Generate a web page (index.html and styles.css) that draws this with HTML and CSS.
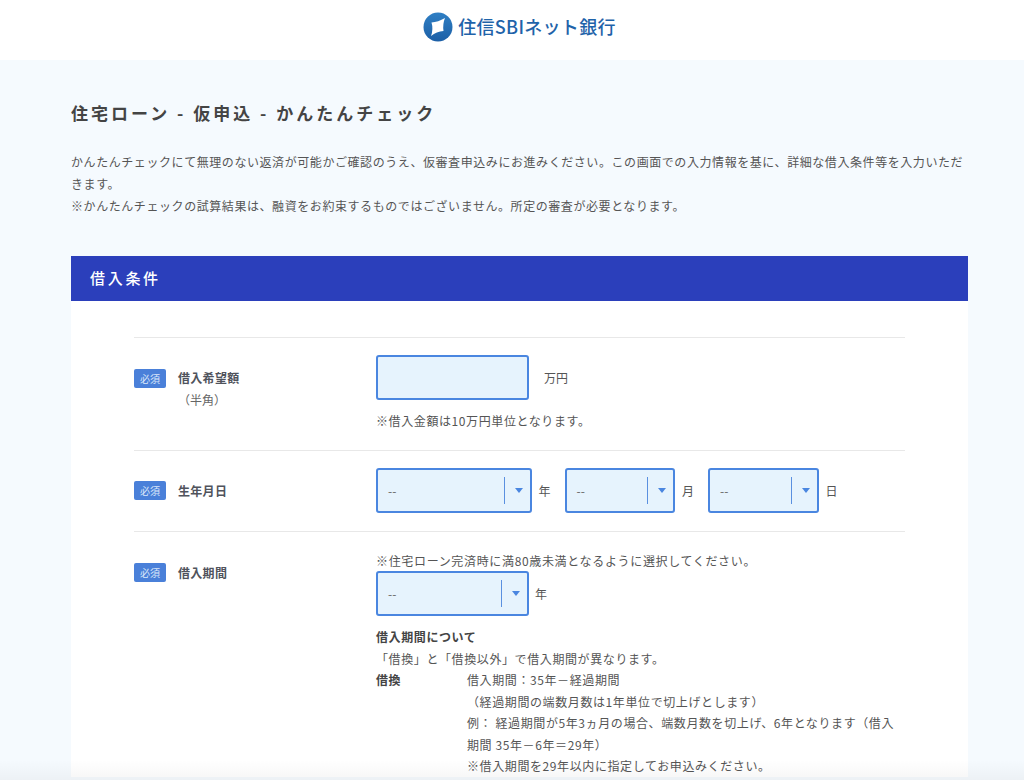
FILE: index.html
```html
<!DOCTYPE html>
<html lang="ja">
<head>
<meta charset="utf-8">
<title>住宅ローン - 仮申込 - かんたんチェック</title>
<link rel="stylesheet" href="styles.css">
</head>
<body>
<header class="site-header">
  <div class="logo">
    <svg class="logo-mark" width="30" height="30" viewBox="0 0 30 30" aria-hidden="true">
      <defs><linearGradient id="lg" x1="0" y1="0" x2="0" y2="1"><stop offset="0" stop-color="#2f7fc4"/><stop offset="1" stop-color="#1c5fa6"/></linearGradient></defs>
      <circle cx="15" cy="15" r="14.5" fill="url(#lg)"/>
      <path d="M8.5 10.5 Q15 10 22 6 Q19.5 12 20.5 19 Q13.5 19.5 8 24 Q10.5 17 8.5 10.5 Z" fill="#fff"/>
    </svg>
    <span class="logo-text">住信SBIネット銀行</span>
  </div>
</header>
<main class="page">
  <h1 class="title">住宅ローン - 仮申込 - かんたんチェック</h1>
  <p class="intro">かんたんチェックにて無理のない返済が可能かご確認のうえ、仮審査申込みにお進みください。この画面での入力情報を基に、詳細な借入条件等を入力いただきます。<br>※かんたんチェックの試算結果は、融資をお約束するものではございません。所定の審査が必要となります。</p>
  <section class="card">
    <h2 class="card-head">借入条件</h2>
    <div class="card-body">
      <div class="row row-amount">
        <div class="label"><span class="badge">必須</span><div class="label-text"><strong>借入希望額</strong><span class="sub">（半角）</span></div></div>
        <div class="control">
          <div class="inline"><input class="input" type="text" aria-label="借入希望額"><span class="unit unit-wide">万円</span></div>
          <p class="note">※借入金額は10万円単位となります。</p>
        </div>
      </div>
      <div class="row row-birth">
        <div class="label"><span class="badge">必須</span><div class="label-text"><strong>生年月日</strong></div></div>
        <div class="control inline top">
          <div class="select s-year"><span>--</span><i class="sep"></i><i class="arrow"></i></div><span class="unit">年</span>
          <div class="select s-md"><span>--</span><i class="sep"></i><i class="arrow"></i></div><span class="unit">月</span>
          <div class="select s-md"><span>--</span><i class="sep"></i><i class="arrow"></i></div><span class="unit">日</span>
        </div>
      </div>
      <div class="row row-term">
        <div class="label"><span class="badge">必須</span><div class="label-text"><strong>借入期間</strong></div></div>
        <div class="control">
          <p class="term-note">※住宅ローン完済時に満80歳未満となるように選択してください。</p>
          <div class="inline"><div class="select s-term"><span>--</span><i class="sep"></i><i class="arrow"></i></div><span class="unit">年</span></div>
          <p class="about"><strong>借入期間について</strong><br>「借換」と「借換以外」で借入期間が異なります。</p>
          <div class="def">
            <strong>借換</strong>
            <p>借入期間：35年－経過期間<br>（経過期間の端数月数は1年単位で切上げとします）<br>例： 経過期間が5年3ヵ月の場合、端数月数を切上げ、6年となります（借入期間 35年－6年＝29年）<br>※借入期間を29年以内に指定してお申込みください。</p>
          </div>
        </div>
      </div>
    </div>
  </section>
</main>
<div class="bottom-shade"></div>
</body>
</html>
```

FILE: styles.css
```css
html, body { margin: 0; padding: 0; height: 780px; overflow: hidden; }
body {
  background: #f5fafe;
  color: #555;
  font-family: "Noto Sans CJK JP", "Noto Sans", sans-serif;
  font-size: 12px;
  position: relative;
}
p, h1, h2 { margin: 0; }
.site-header { height: 60px; background: #fff; display: flex; justify-content: center; align-items: center; }
.logo { display: flex; align-items: center; gap: 5px; margin-top: -6px; margin-left: 15px; }
.logo-mark { display: block; }
.logo-text { color: #1f63a9; font-size: 18px; font-weight: 500; line-height: 24px; letter-spacing: 0.3px; margin-top: -2px; }
.page { padding: 41px 56px 0 71px; }
.title { font-size: 17px; font-weight: 700; line-height: 24px; letter-spacing: 3px; color: #444; }
.intro { margin-top: 26px; line-height: 22px; letter-spacing: 0.57px; color: #555; }
.card { margin-top: 39px; background: #fff; }
.card-head { height: 45px; line-height: 44px; padding-left: 19px; background: #2b3fbb; color: #fff; font-size: 15px; font-weight: 500; letter-spacing: 2.7px; }
.card-body { padding: 36px 63px 0; }
.row { display: flex; border-top: 1px solid #e8e8e8; }
.row-amount { height: 113px; padding-top: 18px; box-sizing: border-box; }
.row-birth { height: 81px; padding-top: 18px; box-sizing: border-box; }
.row-term { padding-top: 19px; }
.row-amount .control, .row-birth .control { margin-top: -1px; }
.label { width: 242px; flex: none; display: flex; align-items: flex-start; padding-top: 12px; }
.row-amount .label { padding-top: 13px; }
.row-term .label { padding-top: 12px; }
.badge { width: 32px; height: 19px; border-radius: 2px; background: #4a80d9; color: #dbe7fa; font-size: 10px; line-height: 19px; text-align: center; flex: none; }
.label-text { margin-left: 12px; line-height: 20px; }
.row-amount .label-text { margin-top: -1px; }
.label-text strong { display: block; color: #50535c; font-weight: 700; letter-spacing: 0.3px; }
.sub { display: block; margin-top: 2px; color: #666; line-height: 20px; }
.control { flex: 1; min-width: 0; }
.inline { display: flex; align-items: center; }
.top { align-self: flex-start; }
.input { width: 153px; height: 45px; box-sizing: border-box; padding: 0; border: 2px solid #4a86e0; border-radius: 3px; background: #e6f3fd; }
.unit { margin: 0 14px 0 7px; color: #555; }
.unit-wide { margin-left: 15px; }
.note { margin-top: 11px; line-height: 20px; letter-spacing: 0.6px; }
.select { position: relative; height: 45px; box-sizing: border-box; border: 2px solid #4a86e0; border-radius: 3px; background: #e6f3fd; }
.select span { position: absolute; left: 10px; top: 11px; line-height: 20px; color: #666; }
.sep { position: absolute; top: 7px; bottom: 7px; right: 25px; width: 1px; background: #5a90e0; }
.arrow { position: absolute; right: 7px; top: 18px; width: 0; height: 0; border: 4.5px solid transparent; border-top: 5px solid #4a86e0; border-bottom: 0; }
.s-year { width: 155.5px; }
.s-md { width: 110.5px; }
.s-term { width: 153px; }
.row-term .unit { margin-left: 6px; }
.term-note { line-height: 20px; letter-spacing: 0.66px; }
.about { margin-top: 10px; line-height: 21.5px; letter-spacing: 0.6px; }
.about strong, .def strong { color: #444; font-weight: 700; }
.def { display: flex; line-height: 21.5px; letter-spacing: 0.6px; }
.def strong { width: 91px; flex: none; }
.def p { width: 438px; }
.bottom-shade { position: absolute; left: 0; right: 0; bottom: 0; height: 20px; background: linear-gradient(to bottom, rgba(0,0,0,0), rgba(0,0,0,0.035)); pointer-events: none; }
```
